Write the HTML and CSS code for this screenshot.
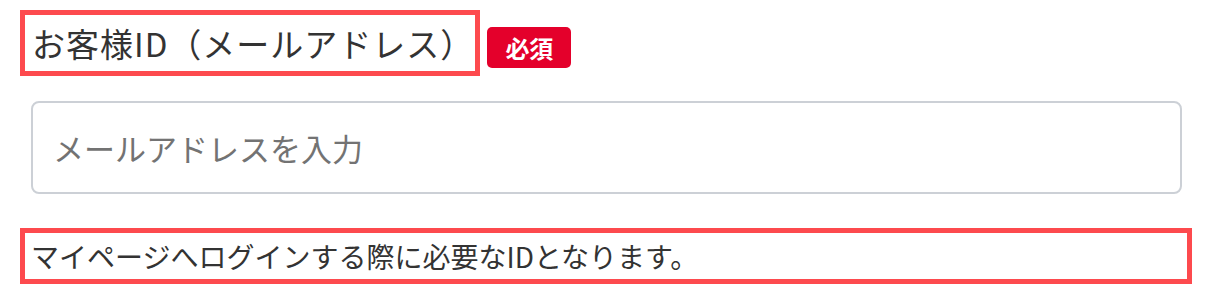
FILE: index.html
```html
<!DOCTYPE html>
<html lang="ja">
<head>
  <meta charset="UTF-8">
  <meta name="viewport" content="width=device-width, initial-scale=1.0">
  <title>お客様ID</title>
  <link rel="stylesheet" href="styles.css">
</head>
<body>
  <div class="field">
    <div class="field-head">
      <label class="field-label" for="email">お客様ID（メールアドレス）</label>
      <span class="badge">必須</span>
    </div>
    <input type="email" id="email" class="field-input" placeholder="メールアドレスを入力">
    <p class="field-note">マイページへログインする際に必要なIDとなります。</p>
  </div>
</body>
</html>
```

FILE: styles.css
```css
body {
  margin: 0;
  background-color: #fff;
  font-family: "Noto Sans CJK JP", "Noto Sans", sans-serif;
  color: #333;
}
.field {
  padding: 10px 20px 0 20px;
}
.field-head {
  display: flex;
  align-items: flex-start;
}
.field-label {
  display: block;
  border: 5px solid #fd4a4e;
  padding: 0 1px 0 7px;
  font-size: 33px;
  letter-spacing: 1px;
  line-height: 56px;
  color: #333;
}
.badge {
  margin: 17px 0 0 7px;
  background-color: #e4002b;
  color: #fff;
  font-weight: bold;
  font-size: 24px;
  line-height: 41px;
  padding: 0 18px;
  border-radius: 5px;
}
.field-input {
  display: block;
  box-sizing: border-box;
  width: calc(100% - 21px);
  height: 93px;
  margin: 25px 10px 0 11px;
  padding: 0 20px;
  border: 2px solid #ccd0d6;
  border-radius: 8px;
  font-family: inherit;
  font-size: 31px;
  color: #333;
  outline: none;
}
.field-input::placeholder {
  color: #737373;
}
.field-note {
  margin: 34px 0 0 0;
  border: 5px solid #fd4a4e;
  padding: 0 6px;
  font-size: 28px;
  line-height: 46px;
  color: #333;
}
```
